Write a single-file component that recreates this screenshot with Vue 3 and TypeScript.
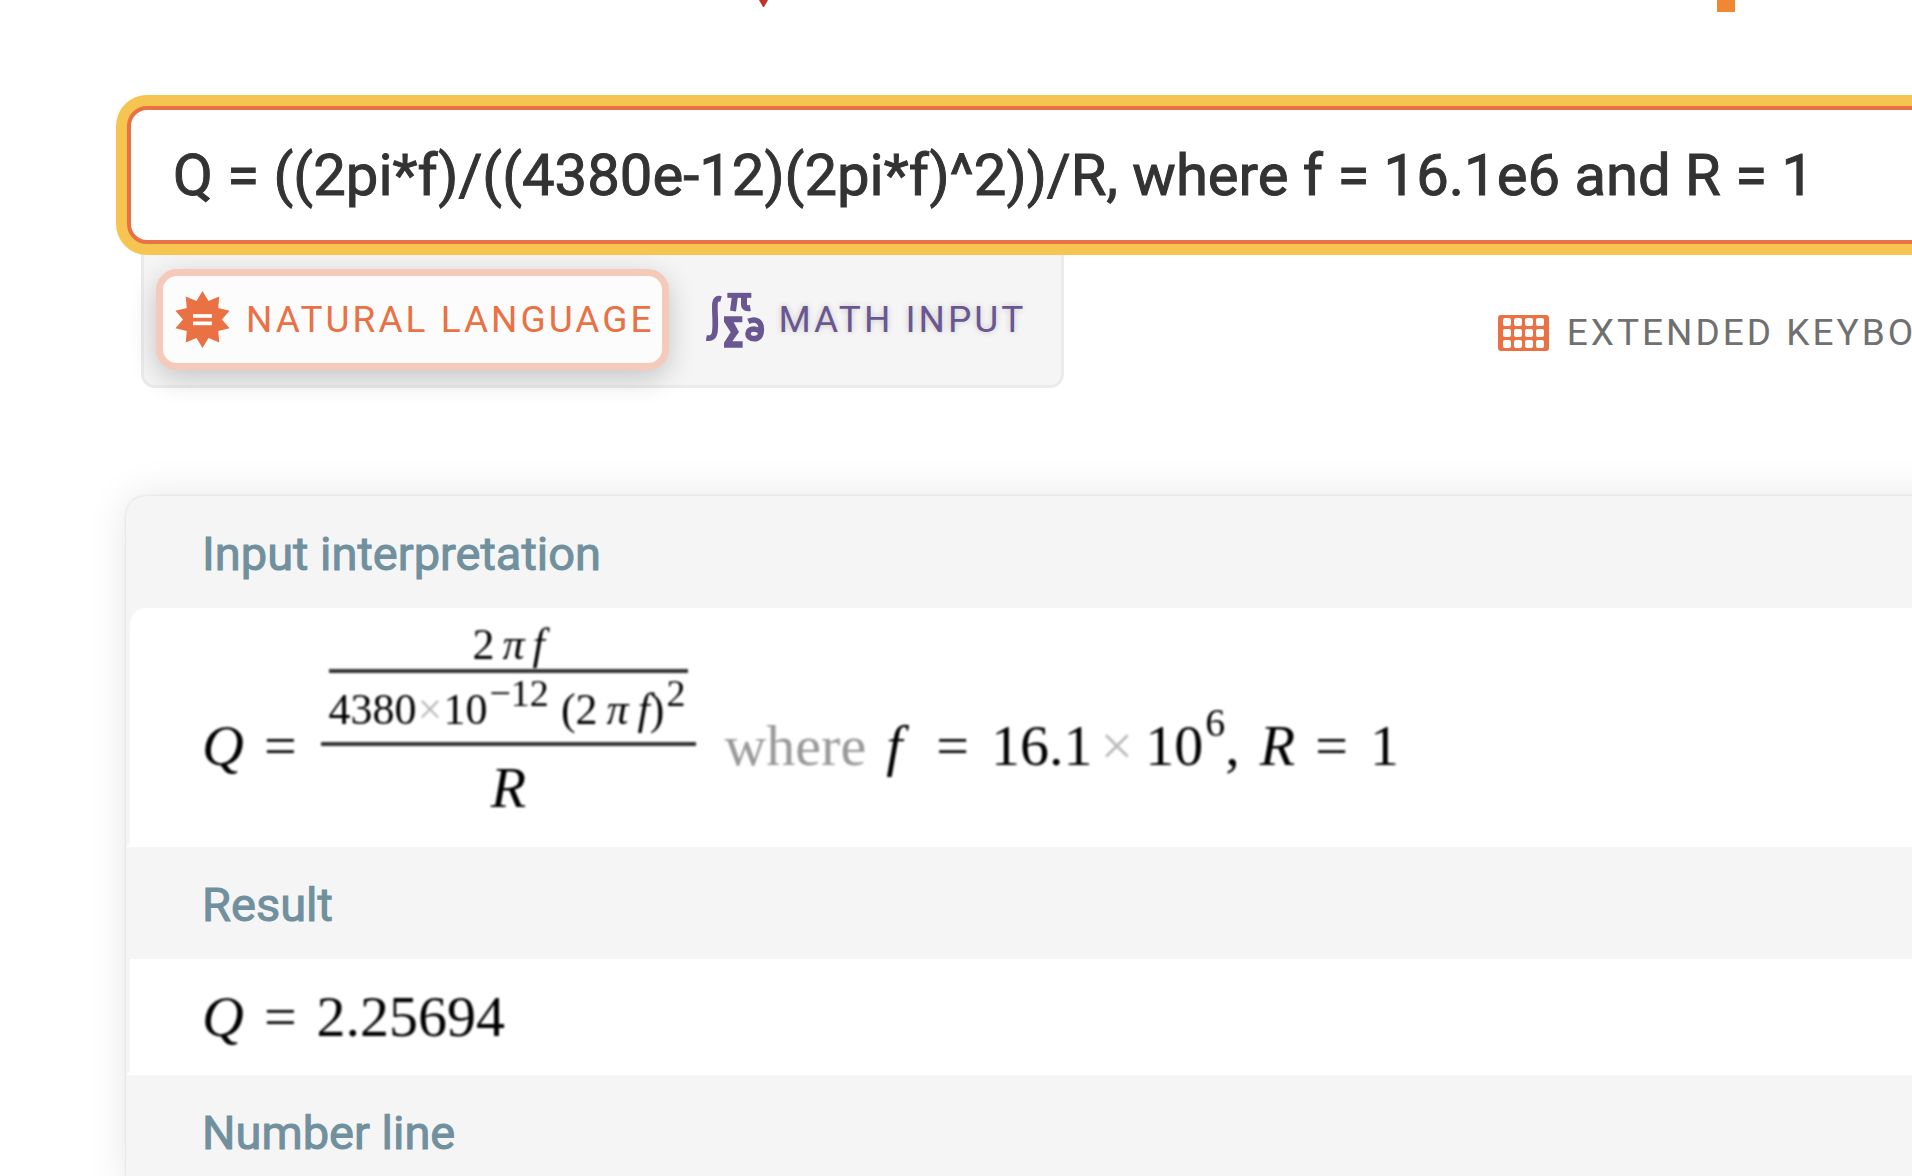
<script setup lang="ts">
import { ref } from 'vue'

const query = ref('Q = ((2pi*f)/((4380e-12)(2pi*f)^2))/R, where f = 16.1e6 and R = 1')
const mode = ref<'natural' | 'math'>('natural')

// Ten-pointed badge: alternates between the outer and the inner radius.
const starPoints = Array.from({ length: 20 }, (_, i) => {
  const radius = i % 2 === 0 ? 85 : 58
  const angle = (i * Math.PI) / 10
  return `${(85 + radius * Math.sin(angle)).toFixed(1)},${(85 - radius * Math.cos(angle)).toFixed(1)}`
}).join(' ')

const keyColumns = [5, 16, 27, 38]
const keyRows = [3, 14, 25]
</script>

<template>
  <div class="page">
    <header class="masthead">
      <svg class="logo" viewBox="0 0 1000 13" aria-hidden="true">
        <path d="M19 0h9l-4 7h-1z" fill="#c0322b" />
        <rect x="977" y="0" width="18" height="12" fill="#f08833" />
      </svg>
    </header>

    <form class="search" @submit.prevent>
      <input v-model="query" class="query" type="text" aria-label="Query" spellcheck="false" />
    </form>

    <div class="toolbar">
      <div class="modes">
        <button type="button" class="mode" :class="{ active: mode === 'natural' }" @click="mode = 'natural'">
          <svg class="star" viewBox="0 0 170 170" aria-hidden="true">
            <polygon :points="starPoints" fill="#e97144" />
            <rect x="57" y="69" width="56" height="11" fill="#fff" />
            <rect x="57" y="91" width="56" height="11" fill="#fff" />
          </svg>
          <span>NATURAL LANGUAGE</span>
        </button>
        <button type="button" class="mode math" :class="{ active: mode === 'math' }" @click="mode = 'math'">
          <svg class="symbols" viewBox="54 30 180 171" fill="none" stroke="#6a5791" aria-hidden="true">
            <path d="M99 54C88 51 82 56 81 66C79 92 84 118 81 148C80 166 73 174 55 171" stroke-width="17" />
            <path d="M118 43H190" stroke-width="15" />
            <path d="M141 44L135 90M168 44V70Q168 84 187 81" stroke-width="18" />
            <path d="M108 106H163V124H137L153 153L133 181H164V200H108V185L128 154L108 122Z" fill="#6a5791" stroke="none" />
            <path d="M181 121C205 111 220 121 220 146C220 165 211 173 199 173C186 173 180 166 180 158C180 149 187 144 198 144C209 144 214 149 220 154" stroke-width="17" />
          </svg>
          <span>MATH INPUT</span>
        </button>
      </div>
      <button type="button" class="keyboard">
        <svg class="keys" viewBox="0 0 51 36" aria-hidden="true">
          <rect width="51" height="36" rx="3" fill="#e97144" />
          <template v-for="y in keyRows" :key="y">
            <rect v-for="x in keyColumns" :key="x" :x="x" :y="y" width="8" height="8" rx="2" fill="#fff" />
          </template>
        </svg>
        <span>EXTENDED KEYBOARD</span>
      </button>
    </div>

    <main class="results">
      <section class="pod">
        <h2>Input interpretation</h2>
        <div class="body first">
          <div class="formula">
            <div class="text lead"><i>Q</i><span>=</span></div>
            <div class="outer">
              <div class="inner">
                <div class="top"><span>2</span><i>π</i><i>f</i></div>
                <div class="bottom">
                  <span>4380<span class="times">×</span>10<sup>−12</sup></span>
                  <span class="group">(2<i>π</i><i>f</i>)<sup>2</sup></span>
                </div>
              </div>
              <div class="divisor"><i>R</i></div>
            </div>
            <div class="text where">
              <span class="word">where</span><i>f</i><span class="equals">=</span><span>16.1</span><span class="times">×</span><span>10<sup>6</sup>,</span><i>R</i><span class="equals">=</span><span>1</span>
            </div>
          </div>
        </div>
      </section>
      <section class="pod">
        <h2>Result</h2>
        <div class="body second">
          <div class="formula">
            <div class="text"><i>Q</i><span>=</span><span>2.25694</span></div>
          </div>
        </div>
      </section>
      <section class="pod">
        <h2>Number line</h2>
      </section>
    </main>
  </div>
</template>

<style>
body {
  margin: 0;
  background: #fff;
}
</style>

<style scoped>
.page {
  height: 100vh;
  overflow: hidden;
  font-family: Roboto, "Liberation Sans", sans-serif;
}

.query,
h2 {
  -webkit-text-stroke: 1px currentColor;
}

.masthead {
  height: 106px;
  padding-left: 740px;
}

.logo {
  display: block;
  width: 1000px;
  height: 13px;
}

.search {
  position: relative;
  z-index: 1;
  margin: 0 -60px 0 127px;
}

.query {
  display: block;
  box-sizing: border-box;
  width: 100%;
  height: 138px;
  padding: 0 42px;
  border: 4px solid #e97144;
  border-radius: 20px;
  outline: none;
  background: #fff;
  box-shadow: 0 0 0 11px #f6c451;
  color: #333;
  font: 400 58px Roboto, "Liberation Sans", sans-serif;
}

.toolbar {
  display: flex;
  align-items: flex-start;
  justify-content: space-between;
  margin: 0 -84px 0 141px;
}

.modes {
  display: flex;
  align-items: flex-start;
  gap: 30px;
  box-sizing: border-box;
  height: 144px;
  padding: 25px 28px 0 12px;
  border: 3px solid #ebebeb;
  border-top: 0;
  border-radius: 0 0 14px 14px;
  background: #f5f5f5;
}

.mode,
.keyboard {
  display: flex;
  align-items: center;
  flex: none;
  border: 0;
  background: none;
  font: 400 37px Roboto, "Liberation Sans", sans-serif;
  letter-spacing: 3px;
  white-space: nowrap;
  cursor: pointer;
}

.mode {
  gap: 15px;
  box-sizing: border-box;
  height: 101px;
  padding: 0 8px 0 11px;
  border: 7px solid transparent;
  border-radius: 21px;
  color: #e97144;
}

.mode.active {
  border-color: #f5cabb;
  background: #fcfcfc;
  box-shadow: 0 8px 28px rgba(0, 0, 0, 0.2);
}

.mode.math {
  gap: 12px;
  padding: 0;
  color: #6a5791;
  text-shadow: 0 0 6px rgba(0, 0, 0, 0.2);
}

.star {
  width: 57px;
  height: 57px;
}

.symbols {
  width: 60px;
  height: 57px;
}

.keyboard {
  gap: 18px;
  margin-top: 67px;
  padding: 0;
  color: #707070;
}

.keys {
  width: 51px;
  height: 36px;
}

.results {
  margin: 108px -60px 0 126px;
  border-radius: 20px 20px 0 0;
  background: #f5f5f5;
  box-shadow: 0 0 3px rgba(0, 0, 0, 0.12), 0 0 40px rgba(0, 0, 0, 0.1);
}

h2 {
  margin: 0;
  padding: 4px 0 0 76px;
  color: #71909e;
  font-size: 47px;
  font-weight: 400;
  line-height: 108px;
}

.body {
  padding-left: 72px;
  border-left: 4px solid #f5f5f5;
  border-bottom: 4px solid #fff;
  background: #fff;
}

.body.first {
  padding-top: 12px;
  padding-bottom: 13px;
  border-top-left-radius: 18px;
}

.body.second {
  padding-top: 26px;
  padding-bottom: 22px;
}

.formula {
  display: flex;
  align-items: flex-start;
  color: #000;
  font-family: "Liberation Serif", "Times New Roman", serif;
  font-size: 58px;
  filter: blur(1px);
}

.text {
  display: flex;
  gap: 20px;
  line-height: 64px;
  white-space: nowrap;
}

.lead,
.where {
  margin-top: 94px;
}

.outer {
  display: flex;
  flex-direction: column;
  align-items: center;
  margin: 0 28px 0 24px;
}

.inner {
  padding: 0 8px;
  border-bottom: 4px solid #333;
  font-size: 44px;
}

.top {
  display: flex;
  justify-content: center;
  gap: 8px;
  border-bottom: 4px solid #333;
  line-height: 49px;
}

.bottom {
  display: flex;
  gap: 12px;
  padding: 4px 3px 0 0;
  line-height: 65px;
  white-space: nowrap;
}

.bottom .times {
  margin: 0 1px;
}

.group i {
  margin-left: 9px;
}

.divisor {
  line-height: 84px;
}

sup {
  margin-left: 2px;
  font-size: 38px;
  line-height: 0;
  vertical-align: 18px;
}

.where sup {
  font-size: 40px;
  vertical-align: 29px;
}

.where .times {
  margin: 0 -8px 0 -12px;
}

.equals {
  margin-right: 2px;
}

.word + i {
  margin-right: 14px;
}

.times {
  color: #bbb;
}

.word {
  color: #999;
}
</style>
